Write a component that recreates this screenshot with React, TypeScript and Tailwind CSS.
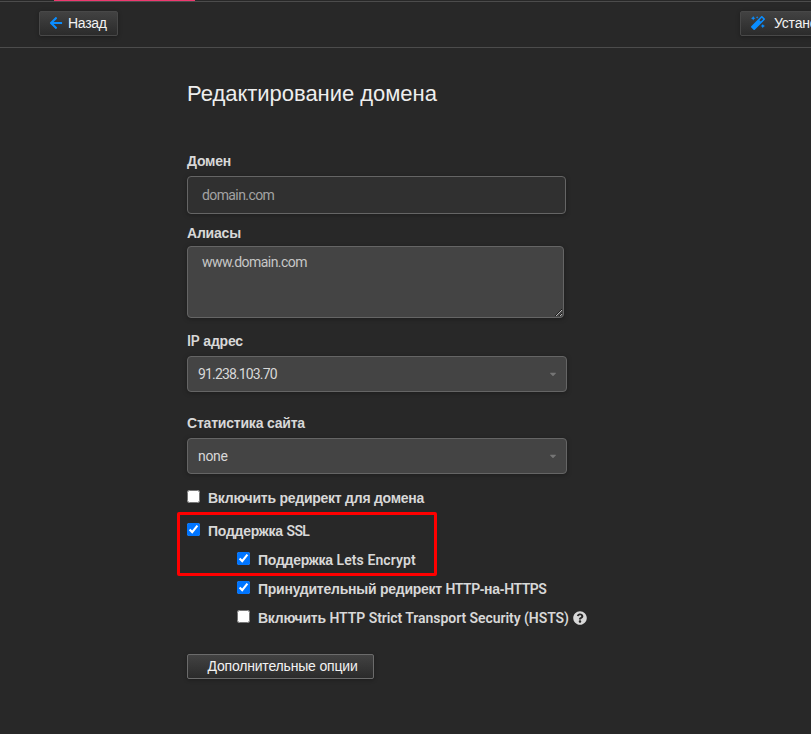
import type { ReactNode } from 'react';
import { FaArrowLeft, FaQuestionCircle, FaCaretDown, FaMagic } from 'react-icons/fa';

const fieldBox = 'block rounded border border-[#656565] shadow-[0_1px_5px_rgba(0,0,0,0.3)] outline-none';

function Latin({ children, className = '' }: { children: ReactNode; className?: string }) {
  return <span className={`font-[Roboto,sans-serif] font-semibold ${className}`}>{children}</span>;
}

function Label({ children, className = '' }: { children: ReactNode; className?: string }) {
  return <label className={`block h-5 text-sm leading-5 font-bold tracking-[-0.2px] ${className}`}>{children}</label>;
}

function Select({ children, className = '' }: { children: ReactNode; className?: string }) {
  return (
    <div className={`${fieldBox} mt-[5px] flex! h-9 w-[380px] items-center justify-between bg-[#444] pr-[9px] pl-2.5 font-[Roboto,sans-serif] text-sm ${className}`}>
      {children}
      <FaCaretDown className="h-2.5 w-2 text-[#757575]" />
    </div>
  );
}

function Check({ children, checked = false, className = '' }: { children: ReactNode; checked?: boolean; className?: string }) {
  return (
    <label className={`flex h-5 items-start text-sm leading-5 font-bold tracking-[-0.25px] whitespace-nowrap ${className}`}>
      <input type="checkbox" defaultChecked={checked} className="mt-0.5 mr-2 h-[13px] w-[13px] shrink-0 accent-[#0075ff]" />
      <span>{children}</span>
    </label>
  );
}

const button = 'flex items-center rounded-xs border bg-linear-to-b from-[#424242] to-[#2b2b2b] text-sm tracking-[-0.18px] text-[#f2f2f2] shadow-[0_1px_4px_rgba(0,0,0,0.3)]';

export default function App() {
  return (
    <div className="h-[734px] w-[811px] overflow-hidden bg-[#282828] font-['Liberation_Sans',Arial,sans-serif] text-[#d8d8d8]">
      <header className="flex h-12 flex-col border-b border-[#4c4c4c]">
        <div className="ml-[54px] h-px w-[141px] bg-[#ef3970]" />
        <div className="h-px bg-[#4c4c4c]" />
        <div className="flex justify-between pt-[9px] pl-[39px]">
          <button className={`${button} h-[25px] w-[79px] gap-[5px] border-[#484848] pb-px pl-[9px]`}>
            <FaArrowLeft className="h-3.5 w-3.5 shrink-0 text-[#0a8dff]" />
            <span className="tracking-[-0.3px]">Назад</span>
          </button>
          <button className={`${button} -mr-10 h-[25px] w-[111px] gap-[9px] overflow-hidden border-[#484848] pb-px pl-2.5`}>
            <FaMagic className="h-3.5 w-3.5 shrink-0 text-[#0a8dff]" />
            <span className="whitespace-nowrap">Установить</span>
          </button>
        </div>
      </header>
      <main className="pl-[187px]">
        <h1 className="pt-[30px] text-[22px] leading-8 tracking-[-0.03px] text-[#eee]"><span>Редактирование домена</span></h1>
        <Label className="mt-[41px]">Домен</Label>
        <input defaultValue="domain.com" className={`${fieldBox} mt-[5px] h-[38px] w-[379px] bg-[#303030] px-3.5 font-[Roboto,sans-serif] text-sm tracking-[-0.6px] text-[#a3a3a3]`} />
        <Label className="mt-[9px]">Алиасы</Label>
        <textarea defaultValue="www.domain.com" className={`${fieldBox} mt-[3px] h-[72px] w-[377px] resize bg-[#444] px-3.5 py-[5px] font-[Roboto,sans-serif] text-sm leading-5 tracking-[-0.55px] text-[#c7c7c7]`} />
        <Label className="mt-[13px]"><Latin>IP</Latin> адрес</Label>
        <Select className="tracking-[-0.85px]">91.238.103.70</Select>
        <Label className="mt-[21px]">Статистика сайта</Label>
        <Select className="tracking-[-0.3px]">none</Select>
        <div className="mt-3.5">
          <Check>Включить редирект для домена</Check>
        </div>
        <div className="mt-1 -ml-[10px] h-16 w-[260px] rounded-[2px] border-3 border-[#ff0000] pt-1.5 pl-[7px]">
          <Check checked>Поддержка <Latin className="tracking-[-0.6px]">SSL</Latin></Check>
          <Check checked className="mt-[9px] pl-[50px]">Поддержка <Latin className="tracking-[0.1px]">Lets Encrypt</Latin></Check>
        </div>
        <Check checked className="mt-[3px] pl-[50px]">Принудительный редирект <Latin className="tracking-[-0.5px]">HTTP</Latin>-на-<Latin className="tracking-[-0.5px]">HTTPS</Latin></Check>
        <Check className="mt-[9px] pl-[50px]">
          Включить <Latin className="tracking-[-0.06px]">HTTP Strict Transport Security (HSTS)</Latin>
          <FaQuestionCircle className="-mt-0.5 ml-1 inline h-3.5 w-3.5" />
        </Check>
        <button className={`${button} mt-[26px] h-[25px] w-[187px] justify-center border-[#6b6b6b] pb-px pl-1`}><span>Дополнительные опции</span></button>
      </main>
    </div>
  );
}
